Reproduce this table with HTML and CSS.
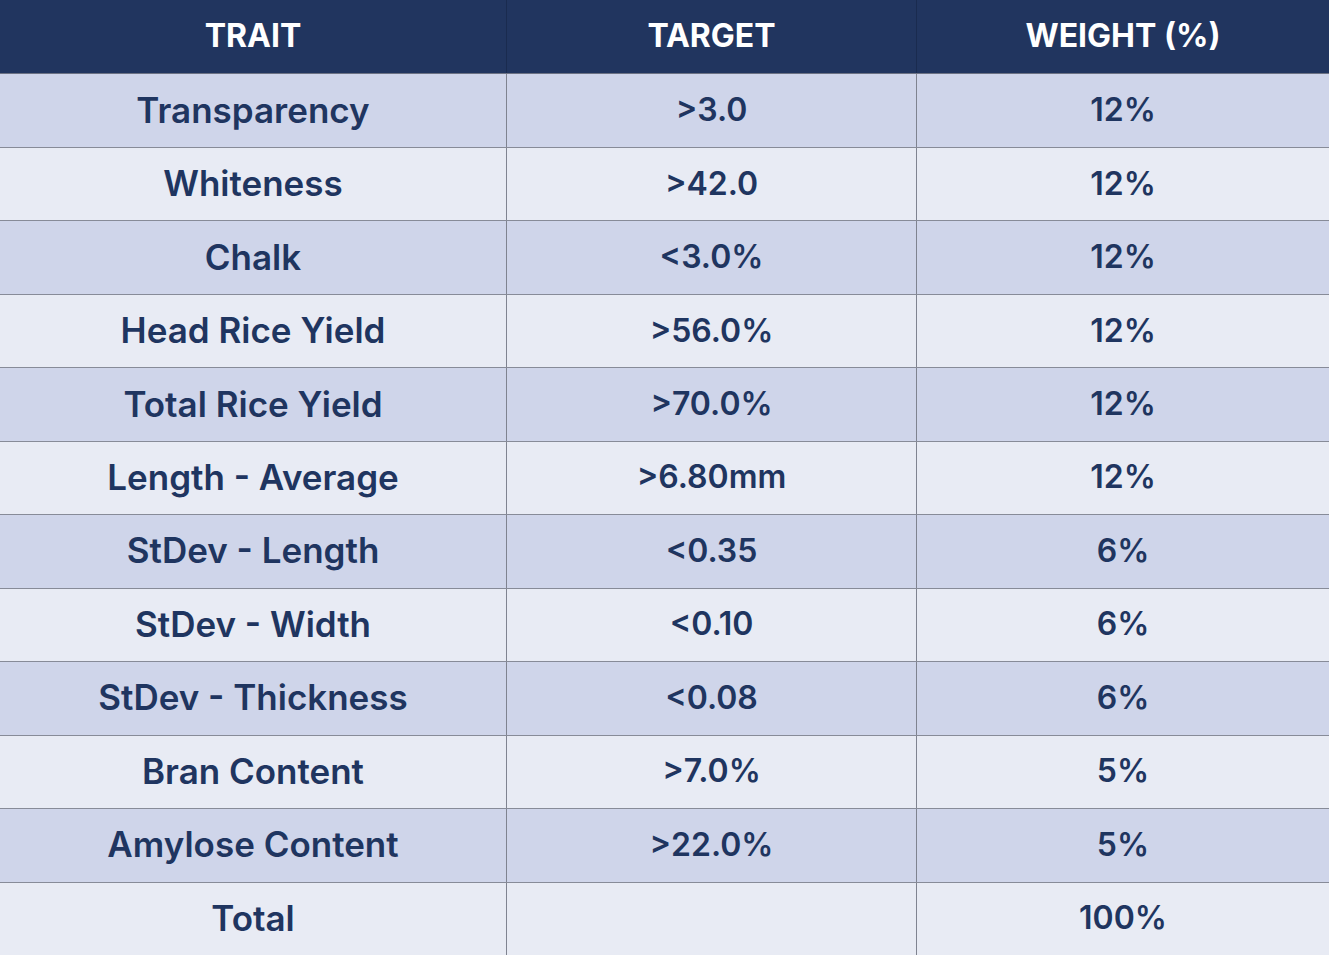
FILE: index.html
```html
<!DOCTYPE html>
<html lang="en">
<head>
<meta charset="utf-8">
<title>Traits</title>
<link rel="stylesheet" href="styles.css">
</head>
<body>
<div class="traits">
  <div class="row head"><div class="cell">TRAIT</div><div class="cell">TARGET</div><div class="cell">WEIGHT (%)</div></div>
  <div class="row dark"><div class="cell">Transparency</div><div class="cell">&gt;3.0</div><div class="cell">12%</div></div>
  <div class="row light"><div class="cell">Whiteness</div><div class="cell">&gt;42.0</div><div class="cell">12%</div></div>
  <div class="row dark"><div class="cell">Chalk</div><div class="cell">&lt;3.0%</div><div class="cell">12%</div></div>
  <div class="row light"><div class="cell">Head Rice Yield</div><div class="cell">&gt;56.0%</div><div class="cell">12%</div></div>
  <div class="row dark"><div class="cell">Total Rice Yield</div><div class="cell">&gt;70.0%</div><div class="cell">12%</div></div>
  <div class="row light"><div class="cell">Length - Average</div><div class="cell">&gt;6.80mm</div><div class="cell">12%</div></div>
  <div class="row dark"><div class="cell">StDev - Length</div><div class="cell">&lt;0.35</div><div class="cell">6%</div></div>
  <div class="row light"><div class="cell">StDev - Width</div><div class="cell">&lt;0.10</div><div class="cell">6%</div></div>
  <div class="row dark"><div class="cell">StDev - Thickness</div><div class="cell">&lt;0.08</div><div class="cell">6%</div></div>
  <div class="row light"><div class="cell">Bran Content</div><div class="cell">&gt;7.0%</div><div class="cell">5%</div></div>
  <div class="row dark"><div class="cell">Amylose Content</div><div class="cell">&gt;22.0%</div><div class="cell">5%</div></div>
  <div class="row light"><div class="cell">Total</div><div class="cell"></div><div class="cell">100%</div></div>
</div>
</body>
</html>
```
FILE: styles.css
```css
html, body {
  margin: 0;
  padding: 0;
  background: #e8ebf4;
}
.traits {
  width: 1329px;
  height: 955px;
  display: grid;
  grid-template-rows: repeat(13, 1fr);
  font-family: "Inter", "Liberation Sans", sans-serif;
  font-weight: 600;
  font-size: 32px;
  color: #1f3560;
}
.row {
  display: grid;
  grid-template-columns: 506px 410px 1fr;
  box-sizing: border-box;
  border-top: 1px solid #878b98;
}
.row.head {
  border-top: none;
  background: #21355f;
  color: #ffffff;
  font-weight: 700;
}
.row.head + .row { border-top: 1px solid #6c7284; }
.dark { background: #cfd5ea; }
.light { background: #e8ebf4; }
.cell {
  display: flex;
  align-items: center;
  justify-content: center;
  border-left: 1px solid #7f8390;
  padding-bottom: 2px;
}
.cell:first-child {
  border-left: none;
  font-size: 35px;
}
.head .cell { border-left-color: #1a2b4f; }
.head .cell:first-child { font-size: 32px; }
```
